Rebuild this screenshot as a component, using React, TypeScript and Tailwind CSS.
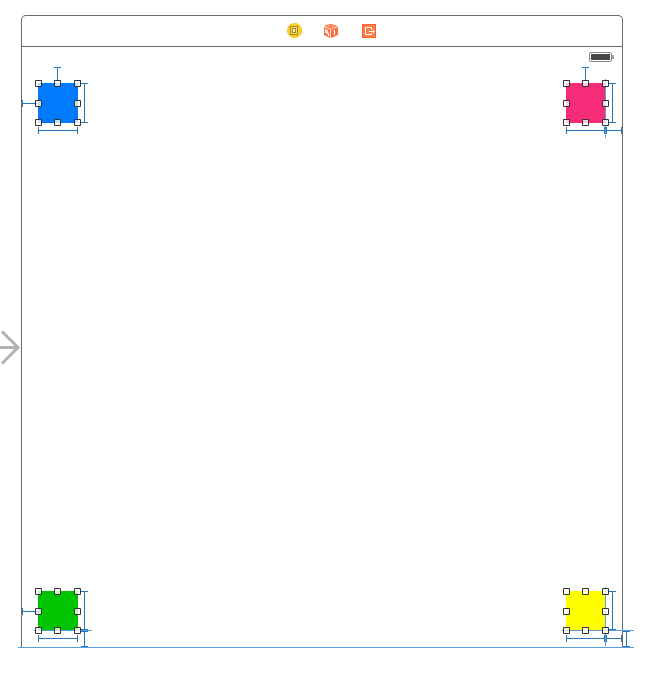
import React from "react";

const BLUE = "#2576b8";
const GUIDE = "#5b9ee0";

function SceneIcon() {
  return (
    <svg width="15" height="16" viewBox="0 0 15 16">
      <circle cx="7.5" cy="7.5" r="7" fill="#fbd01e" stroke="#f0c11c" />
      <rect x="3.5" y="3.5" width="7" height="8" fill="#f3dc82" stroke="#a8891c" />
      <rect x="5.5" y="5.5" width="3" height="4" fill="#fff3bd" stroke="#a8891c" />
    </svg>
  );
}

function ResponderIcon() {
  return (
    <svg width="16" height="16" viewBox="0 0 16 16">
      <path d="M7.5 0.7 14.8 3 8 5.7 1 3Z" fill="#ff7744" />
      <path d="M1 4 7.2 6.3V15L1 12Z" fill="#fb7140" />
      <path d="M8 6.3 15 4V12L8 15Z" fill="#fa6b38" />
      <path d="M2.6 6.8 4.3 7.5V10.3L2.6 9.5ZM5.5 9.8V13M10.5 8.4 11.5 7.6V12" fill="none" stroke="#fff" strokeWidth="1.1" />
      <path d="M5.2 2.5h2M8.8 3.3h2" stroke="#ffc1a7" />
    </svg>
  );
}

function ExitIcon() {
  return (
    <svg width="14" height="14" viewBox="0 0 14 14">
      <rect width="14" height="14" fill="#f4672f" />
      <rect x="1" y="1" width="12" height="12" fill="#ff7c48" />
      <path d="M9.5 5.5V3.5h-6v7h6V9M7 7.5h6M11.5 5.8v3.4" fill="none" stroke="#fff" strokeWidth="1" />
    </svg>
  );
}

function Box({ x, y, fill }: { x: number; y: number; fill: string }) {
  return <rect x={x} y={y} width="40" height="40" fill={fill} />;
}

function Handles({ x, y }: { x: number; y: number }) {
  const spots = [[0, 0], [19, 0], [39, 0], [0, 20], [39, 20], [0, 39], [19, 39], [39, 39]];
  return (
    <>
      {spots.map(([dx, dy]) => (
        <g key={`${dx}-${dy}`}>
          <rect x={x + dx - 2.5} y={y + dy - 2.5} width="6" height="6" fill="#fff" fillOpacity="0.76" />
          <path d={`M${x + dx - 2.5} ${y + dy + 3.5}v-6h6v6z`} fill="none" stroke="#333" />
        </g>
      ))}
    </>
  );
}

function HSpan({ x1, x2, y }: { x1: number; x2: number; y: number }) {
  return <path d={`M${x1 + 0.5} ${y - 3}v7M${x2 + 0.5} ${y - 3}v7M${x1} ${y + 0.5}H${x2 + 1}`} stroke={BLUE} />;
}

function VSpan({ x, y1, y2 }: { x: number; y1: number; y2: number }) {
  return <path d={`M${x - 3} ${y1 + 0.5}h7M${x - 3} ${y2 + 0.5}h7M${x + 0.5} ${y1}V${y2 + 1}`} stroke={BLUE} />;
}

export default function App() {
  return (
    <div className="relative h-[677px] w-[650px] overflow-hidden bg-white pl-[21px] pt-[15px]">
      <div className="flex h-[632px] w-[602px] flex-col rounded-t-[5px] border border-b-0 border-[#6b6b6b]">
        <header className="flex h-[31px] shrink-0 items-center justify-center border-b border-[#6b6b6b] pl-[19px]">
          <SceneIcon />
          <div className="pl-[21px] pr-[23px]"><ResponderIcon /></div>
          <ExitIcon />
        </header>
        <div className="flex justify-end pr-[8px] pt-[5px]">
          <svg width="25" height="10" viewBox="0 0 25 10">
            <rect x="0.5" y="0.5" width="22" height="9" rx="1.5" fill="#fff" stroke="#858585" />
            <rect x="2" y="2" width="19" height="6" fill="#464646" />
            <path d="M24 3v4" stroke="#606060" strokeWidth="1.2" />
          </svg>
        </div>
      </div>

      <svg className="absolute left-0 top-0" width="650" height="677" viewBox="0 0 650 677" fill="none">
        <path d="M0 347.5H18M2 331.5 18 347.5 2 363.5" stroke="#b2b2b2" strokeWidth="3" />

        <Box x={38} y={83} fill="#007aff" />
        <Box x={566} y={83} fill="#f72c78" />
        <Box x={38} y={591} fill="#00c400" />
        <Box x={566} y={591} fill="#ffff00" />

        <path d="M54 67.5h7M57.5 67v14" stroke={BLUE} />
        <HSpan x1={22} x2={38} y={103} />
        <VSpan x={84} y1={83} y2={122} />
        <HSpan x1={38} x2={77} y={130} />

        <path d="M582 67.5h7M585.5 67v14" stroke={BLUE} />
        <VSpan x={612} y1={83} y2={122} />
        <HSpan x1={566} x2={604} y={130} />
        <HSpan x1={606} x2={621} y={130} />
        <path d="M605.5 79v59" stroke={GUIDE} />

        <HSpan x1={22} x2={38} y={611} />
        <VSpan x={84} y1={591} y2={629} />
        <VSpan x={84} y1={631} y2={646} />
        <HSpan x1={38} x2={77} y={638} />
        <path d="M34 630.5h58" stroke={GUIDE} />

        <VSpan x={612} y1={591} y2={629} />
        <VSpan x={626} y1={631} y2={646} />
        <HSpan x1={566} x2={604} y={638} />
        <HSpan x1={606} x2={621} y={638} />
        <path d="M562 630.5h72M605.5 587v59M18 647.5h616" stroke={GUIDE} />

        <Handles x={38} y={83} />
        <Handles x={566} y={83} />
        <Handles x={38} y={591} />
        <Handles x={566} y={591} />
      </svg>
    </div>
  );
}
